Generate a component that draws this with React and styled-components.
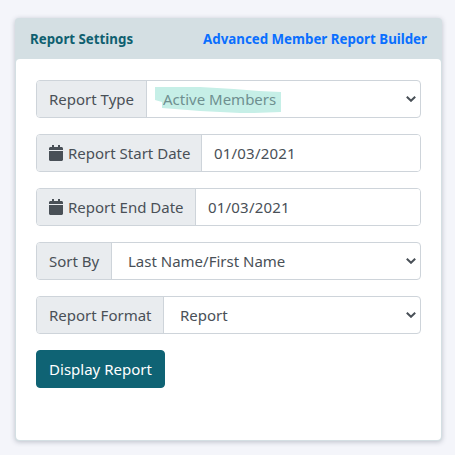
import React from 'react';
import styled, { createGlobalStyle } from 'styled-components';

const FONT = `"Noto Sans", "Open Sans", sans-serif`;

const chevron = `url("data:image/svg+xml,%3csvg xmlns='http://www.w3.org/2000/svg' viewBox='0 0 10 6'%3e%3cpath fill='none' stroke='%23495057' stroke-width='2' d='M.8 .8l4.200 4 4.200-4'/%3e%3c/svg%3e")`;

const GlobalStyle = createGlobalStyle`
  html, body {
    margin: 0;
    background: #f4f5fa;
  }
  body {
    font-family: ${FONT};
  }
`;

const Page = styled.div`
  box-sizing: border-box;
  width: 455px;
  height: 455px;
  padding: 18px 13px 14px 15px;
`;

const Card = styled.section`
  display: flex;
  flex-direction: column;
  height: 423px;
  background: #d4dfe3;
  border-radius: 4px;
  box-shadow: 0 1px 5px rgba(60, 70, 90, 0.3);
`;

const CardHeader = styled.header`
  display: flex;
  align-items: center;
  justify-content: space-between;
  height: 41px;
  padding: 0 15px;
  font-size: 13.3px;
  font-weight: 700;
`;

const CardTitle = styled.span`
  color: #0f5f70;
`;

const BuilderLink = styled.a`
  color: #0a6fff;
  text-decoration: none;
`;

const CardBody = styled.div`
  flex: 1;
  display: flex;
  flex-direction: column;
  align-items: flex-start;
  gap: 16px;
  margin: 0 1px 1px;
  padding: 21px 20px 0;
  background: #fff;
  border-radius: 4px;
`;

const InputGroup = styled.div`
  position: relative;
  box-sizing: border-box;
  display: flex;
  align-self: stretch;
  height: 38px;
  border: 1px solid #ced4da;
  border-radius: 4px;
  overflow: hidden;
  font-size: 15px;
  color: #495057;
`;

const Addon = styled.span`
  display: flex;
  align-items: center;
  gap: 5px;
  flex: none;
  width: ${(p) => p.$width}px;
  box-sizing: border-box;
  padding-left: 12px;
  background: #e9ecef;
  border-right: 1px solid #ced4da;
  white-space: nowrap;
`;

const Marker = styled.svg`
  position: absolute;
  left: 117px;
  top: 6px;
  width: 128px;
  height: 27px;
`;

const Select = styled.select`
  position: relative;
  flex: 1;
  min-width: 0;
  height: 100%;
  padding: 0 28px 0 16px;
  border: 0;
  outline: 0;
  appearance: none;
  background: ${chevron} no-repeat right 4px center / 10px 6px;
  font: inherit;
  color: ${(p) => (p.$muted ? '#6f8f90' : '#495057')};
`;

const DateInput = styled.input`
  flex: 1;
  min-width: 0;
  padding: 0 12px;
  border: 0;
  outline: 0;
  font: inherit;
  letter-spacing: 0.2px;
  color: #495057;
`;

const Button = styled.button`
  box-sizing: border-box;
  height: 38px;
  width: 129px;
  padding: 0;
  border: 1px solid #0f6374;
  border-radius: 4px;
  background: #0f6374;
  color: #fff;
  font-family: ${FONT};
  font-size: 15px;
`;

function CalendarIcon() {
  return (
    <svg width="14" height="16" viewBox="0 0 448 512" fill="#495057">
      <path d="M12 192h424c6.600 0 12 5.400 12 12v260c0 26.500-21.500 48-48 48H48c-26.500 0-48-21.500-48-48V204c0-6.600 5.400-12 12-12zm436-44v-36c0-26.500-21.500-48-48-48h-48V12c0-6.600-5.400-12-12-12h-40c-6.600 0-12 5.400-12 12v52H160V12c0-6.600-5.400-12-12-12h-40c-6.600 0-12 5.400-12 12v52H48C21.500 64 0 85.500 0 112v36c0 6.600 5.400 12 12 12h424c6.600 0 12-5.400 12-12z" />
    </svg>
  );
}

export default function App() {
  return (
    <Page>
      <GlobalStyle />
      <Card>
        <CardHeader>
          <CardTitle>Report Settings</CardTitle>
          <BuilderLink href="#">Advanced Member Report Builder</BuilderLink>
        </CardHeader>
        <CardBody>
          <InputGroup>
            <Addon $width={110}>Report Type</Addon>
            <Marker viewBox="0 0 128 27">
              <path
                d="M1 0 L46 0 L80 2 L105 4 L127 5 L127 25 L100 26 L86 26 L46 24 L8 21 L8 15 L1 13 Z"
                fill="#c6efe7"
              />
            </Marker>
            <Select $muted defaultValue="active">
              <option value="active">Active Members</option>
            </Select>
          </InputGroup>
          <InputGroup>
            <Addon $width={165}>
              <CalendarIcon />
              Report Start Date
            </Addon>
            <DateInput defaultValue="01/03/2021" />
          </InputGroup>
          <InputGroup>
            <Addon $width={159}>
              <CalendarIcon />
              Report End Date
            </Addon>
            <DateInput defaultValue="01/03/2021" />
          </InputGroup>
          <InputGroup>
            <Addon $width={75}>Sort By</Addon>
            <Select defaultValue="name">
              <option value="name">Last Name/First Name</option>
            </Select>
          </InputGroup>
          <InputGroup>
            <Addon $width={127}>Report Format</Addon>
            <Select defaultValue="report">
              <option value="report">Report</option>
            </Select>
          </InputGroup>
          <Button>Display Report</Button>
        </CardBody>
      </Card>
    </Page>
  );
}
